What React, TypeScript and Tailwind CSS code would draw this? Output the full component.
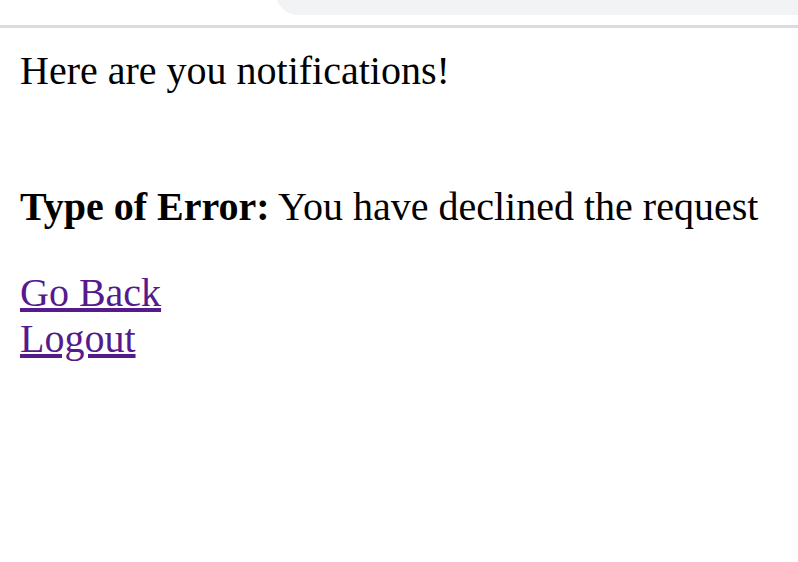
export default function App() {
  return (
    <div className="min-h-[562px] bg-white font-['Liberation_Serif',serif] text-[40px] leading-[46px] text-black">
      <div className="flex h-[25px]">
        <div className="w-[275px] shrink-0" />
        <div className="-mt-[10px] h-[25px] flex-1 rounded-bl-[24px] bg-[#f1f3f4]" />
      </div>
      <div className="h-[3px] bg-[#dadce0]" />
      <div className="p-[20px]">
        <div>Here are you notifications!</div>
        <br />
        <p className="mt-[44px] mb-[40px]">
          <b>Type of Error:</b> You have declined the request
        </p>
        <a href="#" className="text-[#551a8b] underline">
          Go Back
        </a>
        <br />
        <a href="#" className="text-[#551a8b] underline">
          Logout
        </a>
      </div>
    </div>
  );
}
